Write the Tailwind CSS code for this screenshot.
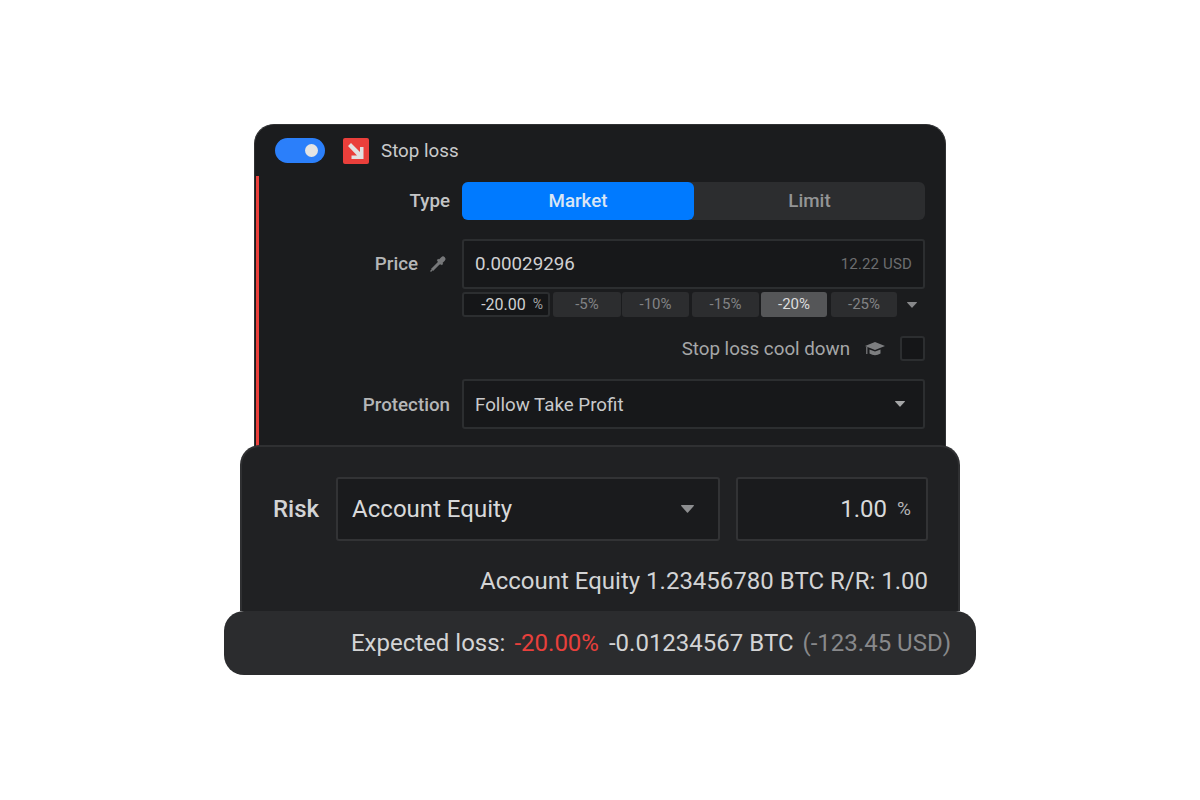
<!DOCTYPE html>
<html lang="en">
<head>
    <meta charset="UTF-8">
    <title>Stop loss</title>
    <script src="https://cdn.jsdelivr.net/npm/@tailwindcss/browser@4"></script>
</head>
<body class="bg-white font-['Roboto',sans-serif]">
    <div class="w-[1200px] h-[800px] flex flex-col items-center pt-[124px] overflow-hidden">

        <!-- stop loss card -->
        <div class="w-[692px] h-[322px] bg-[#1b1c1e] border border-[#303133] border-b-0 rounded-t-[20px] flex flex-col">
            <div class="h-[51px] shrink-0 flex items-center pl-[20px]">
                <div class="w-[50px] h-[25px] rounded-full bg-[#2b7ffa] flex items-center justify-end pr-[7px]">
                    <div class="w-[13px] h-[13px] rounded-full bg-[#e4e4e4]"></div>
                </div>
                <div class="w-[26px] h-[26px] ml-[18px] rounded-[2px] bg-[#ea3f3b]">
                    <svg width="26" height="26" viewBox="0 0 26 26"><path d="M5 8 L8 5 L17 14 V9 H20.5 V21 H8.5 V17.5 H14 Z" fill="#e2e2e2"/></svg>
                </div>
                <span class="ml-[12px] pt-[2px] text-[18.75px] text-[#c9cacb]">Stop loss</span>
            </div>

            <div class="flex-1 ml-[1px] border-l-[3px] border-[#ea3f3b] pr-[20px] pt-[6px]">
                <div class="flex items-center">
                    <div class="w-[191px] text-right text-[18.75px] font-medium text-[#c4c5c6]">Type</div>
                    <div class="ml-[12px] flex-1 h-[38px] flex rounded-[6px] bg-[#2c2d2f]">
                        <div class="w-[232px] rounded-[6px] bg-[#007aff] flex items-center justify-center text-[18.75px] font-medium text-[#d9e6f5]">Market</div>
                        <div class="flex-1 flex items-center justify-center text-[18.75px] font-medium text-[#949596]">Limit</div>
                    </div>
                </div>

                <div class="flex mt-[19px]">
                    <div class="w-[191px] h-[49px] flex items-center justify-end gap-[11px] pr-[3px]">
                        <span class="pt-[2px] text-[18.75px] font-medium text-[#b5b6b7]">Price</span>
                        <svg width="18" height="18" viewBox="0 0 18 18" fill="none" stroke="#77787a"><path d="M3 15 L10.5 7.5" stroke-width="3"/><path d="M11.2 6.8 L14 4" stroke-width="5" stroke-linecap="round"/><path d="M8.5 4.5 L13.5 9.5" stroke-width="2"/><path d="M1.5 16.5 L3 15" stroke-width="1.5"/></svg>
                    </div>
                    <div class="ml-[12px] flex-1">
                        <div class="h-[50px] border-2 border-[#2c2e30] rounded-[3px] bg-[#17181a] flex items-center justify-between pl-[11px] pr-[11px]">
                            <span class="text-[18.75px] text-[#d0d1d2]">0.00029296</span>
                            <span class="text-[15px] tracking-[0.15px] text-[#6c6d6f]">12.22 USD</span>
                        </div>
                        <div class="flex items-center mt-[3px] h-[25px]">
                            <div class="w-[88px] h-[25px] border-2 border-[#2c2e30] rounded-[3px] bg-[#151618] flex items-center justify-end pr-[5px] gap-[7px]">
                                <span class="text-[16px] text-[#d0d1d2]">-20.00</span>
                                <span class="text-[14px] text-[#a5a6a7]">%</span>
                            </div>
                            <div class="ml-[3px] w-[68px] h-[25px] rounded-[3px] bg-[#2c2d2f] flex items-center justify-center text-[15px] text-[#828385]">-5%</div>
                            <div class="ml-[1px] w-[67px] h-[25px] rounded-[3px] bg-[#2c2d2f] flex items-center justify-center text-[15px] text-[#828385]">-10%</div>
                            <div class="ml-[3px] w-[67px] h-[25px] rounded-[3px] bg-[#2c2d2f] flex items-center justify-center text-[15px] text-[#828385]">-15%</div>
                            <div class="ml-[2px] w-[66px] h-[25px] rounded-[3px] bg-[#555658] flex items-center justify-center text-[15px] text-[#dcdddd]">-20%</div>
                            <div class="ml-[4px] w-[66px] h-[25px] rounded-[3px] bg-[#2c2d2f] flex items-center justify-center text-[15px] text-[#828385]">-25%</div>
                            <svg class="ml-[10px]" width="10" height="6" viewBox="0 0 10 6" fill="#87888a"><path d="M0 .5 Q0 0 .5 0 H9.5 Q10 0 10 .5 L5.4 5.6 Q5 6 4.6 5.6 Z"/></svg>
                        </div>
                    </div>
                </div>

                <div class="flex items-center justify-end h-[25px] mt-[19px]">
                    <span class="pt-[2px] text-[18.75px] text-[#a6a7a8]">Stop loss cool down</span>
                    <svg class="ml-[15px]" width="20" height="16" viewBox="0 0 20 16" fill="#7d7e80"><path d="M10 1 L20 5 L10 9 L0 5 Z"/><path d="M4.5 8.5 L10 10.6 L15.5 8.5 V12.5 Q10 16 4.5 12.5 Z"/><rect x="1.2" y="6" width="1.2" height="7"/></svg>
                    <div class="ml-[15px] w-[25px] h-[25px] border-2 border-[#2c2e30] rounded-[3px] bg-[#151618]"></div>
                </div>

                <div class="flex items-center mt-[18px]">
                    <div class="w-[191px] pt-[2px] text-right text-[18.75px] font-medium text-[#b5b6b7]">Protection</div>
                    <div class="ml-[12px] flex-1 h-[50px] border-2 border-[#2c2e30] rounded-[3px] bg-[#17181a] flex items-center justify-between pl-[11px] pr-[18px]">
                        <span class="pt-[2px] text-[18.75px] text-[#c9cacb]">Follow Take Profit</span>
                        <svg width="10" height="6" viewBox="0 0 10 6" fill="#a5a6a7"><path d="M0 .5 Q0 0 .5 0 H9.5 Q10 0 10 .5 L5.4 5.6 Q5 6 4.6 5.6 Z"/></svg>
                    </div>
                </div>
            </div>
        </div>

        <!-- risk panel -->
        <div class="w-[720px] h-[166px] -mt-[1px] shrink-0 bg-[#202123] border-2 border-[#2f3032] border-b-0 rounded-t-[20px] pt-[30px] pl-[31px] pr-[30px]">
            <div class="flex items-center">
                <span class="text-[24px] font-medium text-[#d3d4d5]">Risk</span>
                <div class="ml-[17px] w-[384px] h-[64px] border-2 border-[#323335] rounded-[3px] bg-[#1a1b1d] flex items-center justify-between pl-[14px] pr-[24px]">
                    <span class="text-[24px] text-[#d8d9da]">Account Equity</span>
                    <svg width="13" height="8" viewBox="0 0 13 8" fill="#8d8e90"><path d="M0 .7 Q0 0 .7 0 H12.3 Q13 0 13 .7 L7 7.6 Q6.5 8 6 7.6 Z"/></svg>
                </div>
                <div class="ml-[16px] flex-1 h-[64px] border-2 border-[#323335] rounded-[3px] bg-[#1a1b1d] flex items-center justify-end pr-[15px]">
                    <span class="text-[24px] text-[#d8d9da]">1.00</span>
                    <span class="ml-[10px] text-[19px] text-[#b5b6b7]">%</span>
                </div>
            </div>
            <div class="mt-[22px] text-right text-[24px] text-[#d3d4d5]">Account Equity 1.23456780 BTC R/R: 1.00</div>
        </div>

        <!-- expected loss bar -->
        <div class="w-[752px] h-[64px] shrink-0 bg-[#2b2c2e] rounded-[20px] flex items-center justify-end pr-[25px] text-[24px]">
            <span class="text-[#d3d4d5]">Expected loss:</span>
            <span class="ml-[9px] text-[#e8403c]">-20.00%</span>
            <span class="ml-[10px] text-[#d3d4d5]">-0.01234567 BTC</span>
            <span class="ml-[9px] text-[#88898b]">(-123.45 USD)</span>
        </div>
    </div>
</body>
</html>
